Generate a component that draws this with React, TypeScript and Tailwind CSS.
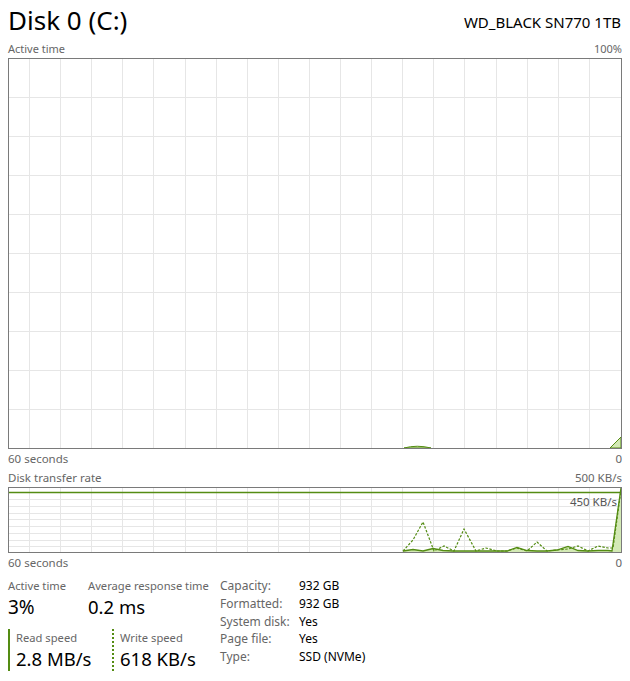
import React from "react";

const LINE = "#548c13";
const FILL = "#d3e9b5";
const GRID = "#e6e6e6";

const vLines = Array.from({ length: 19 }, (_, k) => 29.5 + k * 31.1);
const hLinesTop = Array.from({ length: 9 }, (_, k) => 58.5 + (k + 1) * 38.95);
const hLinesRate = [499, 506, 513, 519.5, 526, 533, 540, 546];

// write speed, dashed (absolute page coords)
const writePts: [number, number][] = [
  [403, 551], [413, 540], [423, 522], [434, 551], [444, 546], [454, 551],
  [464, 529], [476, 551], [486, 548], [497, 551], [507, 551], [517, 548],
  [527, 551], [537, 542], [547, 551], [557, 550], [568, 549], [578, 546],
  [588, 551], [598, 546], [608, 548], [613, 548], [621, 490],
];

// read speed, solid + fill
const readPts: [number, number][] = [
  [403, 551], [413, 549.5], [423, 551], [433, 548.5], [443, 550.5], [453, 551],
  [507, 551], [517, 547.5], [527, 550.5], [537, 551], [547, 551], [557, 550],
  [568, 546.5], [578, 550.5], [588, 551], [598, 550.5], [608, 550.5], [612, 551],
  [621, 488],
];

const toStr = (p: [number, number][]) => p.map(([x, y]) => `${x},${y}`).join(" ");

function Grid({ top, bottom, hs }: { top: number; bottom: number; hs: number[] }) {
  return (
    <g stroke={GRID} strokeWidth={1} shapeRendering="crispEdges">
      {vLines.map((x) => (
        <line key={"v" + x} x1={x} y1={top} x2={x} y2={bottom} />
      ))}
      {hs.map((y) => (
        <line key={"h" + y} x1={0} y1={y} x2={630} y2={y} />
      ))}
    </g>
  );
}

function ActiveTimeChart() {
  return (
    <div className="h-[391px] w-full border border-[#7a7a7a]">
      <svg width="612" height="389" viewBox="9 59 612 389" className="block">
        <Grid top={59} bottom={448} hs={hLinesTop} />
        <path d="M404,448 Q417,444.5 431,448 Z" fill={FILL} stroke={LINE} strokeWidth={1} />
        <path d="M610,448 L621,437 L621,448 Z" fill={FILL} stroke={LINE} strokeWidth={1} />
      </svg>
    </div>
  );
}

function TransferChart() {
  const fillPts: [number, number][] = [...readPts, [621, 552], [403, 552]];
  return (
    <div className="relative h-[66px] w-full border border-[#7a7a7a]">
      <svg width="612" height="64" viewBox="9 488 612 64" className="block">
        <Grid top={488} bottom={552} hs={hLinesRate} />
        <line x1={0} y1={492.5} x2={630} y2={492.5} stroke={LINE} strokeWidth={1.5} />
        <polygon points={toStr(fillPts)} fill={FILL} />
        <polyline points={toStr(readPts)} fill="none" stroke={LINE} strokeWidth={1.3} />
        <polyline
          points={toStr(writePts)}
          fill="none"
          stroke={LINE}
          strokeWidth={1.2}
          strokeDasharray="2.5 1.5"
        />
      </svg>
      <span className="absolute right-[4px] top-[7px] text-[11.5px] leading-[14px] text-[#555]">
        450 KB/s
      </span>
    </div>
  );
}

function Row({ left, right }: { left: string; right: string }) {
  return (
    <div className="flex h-[19px] items-center justify-between text-[11.5px] text-[#666]">
      <span>{left}</span>
      <span>{right}</span>
    </div>
  );
}

const specs: [string, string][] = [
  ["Capacity:", "932 GB"],
  ["Formatted:", "932 GB"],
  ["System disk:", "Yes"],
  ["Page file:", "Yes"],
  ["Type:", "SSD (NVMe)"],
];

export default function App() {
  return (
    <div className="h-[681px] w-[630px] bg-white px-2 font-['Segoe_UI','Noto_Sans',sans-serif] text-black">
      <div className="flex h-[40px] items-center justify-between pr-[1px]">
        <h1 className="text-[26px] leading-[30px]">Disk 0 (C:)</h1>
        <span className="pt-[5px] text-[15px]">WD_BLACK SN770 1TB</span>
      </div>
      <div className="flex h-[18px] items-center justify-between text-[11px] text-[#666]">
        <span>Active time</span>
        <span>100%</span>
      </div>
      <ActiveTimeChart />
      <Row left="60 seconds" right="0" />
      <Row left="Disk transfer rate" right="500 KB/s" />
      <TransferChart />
      <Row left="60 seconds" right="0" />

      <div className="flex pt-[5px]">
        <div className="w-[212px]">
          <div className="flex">
            <div className="w-[80px]">
              <div className="h-[18px] text-[11.2px] leading-[18px] text-[#666]">Active time</div>
              <div className="h-[24px] text-[19px] leading-[24px]">3%</div>
            </div>
            <div>
              <div className="h-[18px] text-[11.2px] leading-[18px] text-[#666]">Average response time</div>
              <div className="h-[24px] text-[18.5px] leading-[24px]">0.2 ms</div>
            </div>
          </div>
          <div className="mt-[10px] flex">
            <div className="flex w-[104px]">
              <div className="h-[42px] w-[2px] bg-[#548c13]" />
              <div className="pl-[6px]">
                <div className="h-[17px] text-[11.2px] leading-[17px] text-[#666]">Read speed</div>
                <div className="h-[25px] text-[18.5px] leading-[25px]">2.8 MB/s</div>
              </div>
            </div>
            <div className="flex">
              <div className="h-[42px] w-0 border-l-2 border-dotted border-[#548c13]" />
              <div className="pl-[6px]">
                <div className="h-[17px] text-[11.2px] leading-[17px] text-[#666]">Write speed</div>
                <div className="h-[25px] text-[18.5px] leading-[25px]">618 KB/s</div>
              </div>
            </div>
          </div>
        </div>
        <div className="text-[12px] leading-[17.75px]">
          {specs.map(([k, v]) => (
            <div key={k} className="flex">
              <span className="w-[79px] text-[#666]">{k}</span>
              <span>{v}</span>
            </div>
          ))}
        </div>
      </div>
    </div>
  );
}
